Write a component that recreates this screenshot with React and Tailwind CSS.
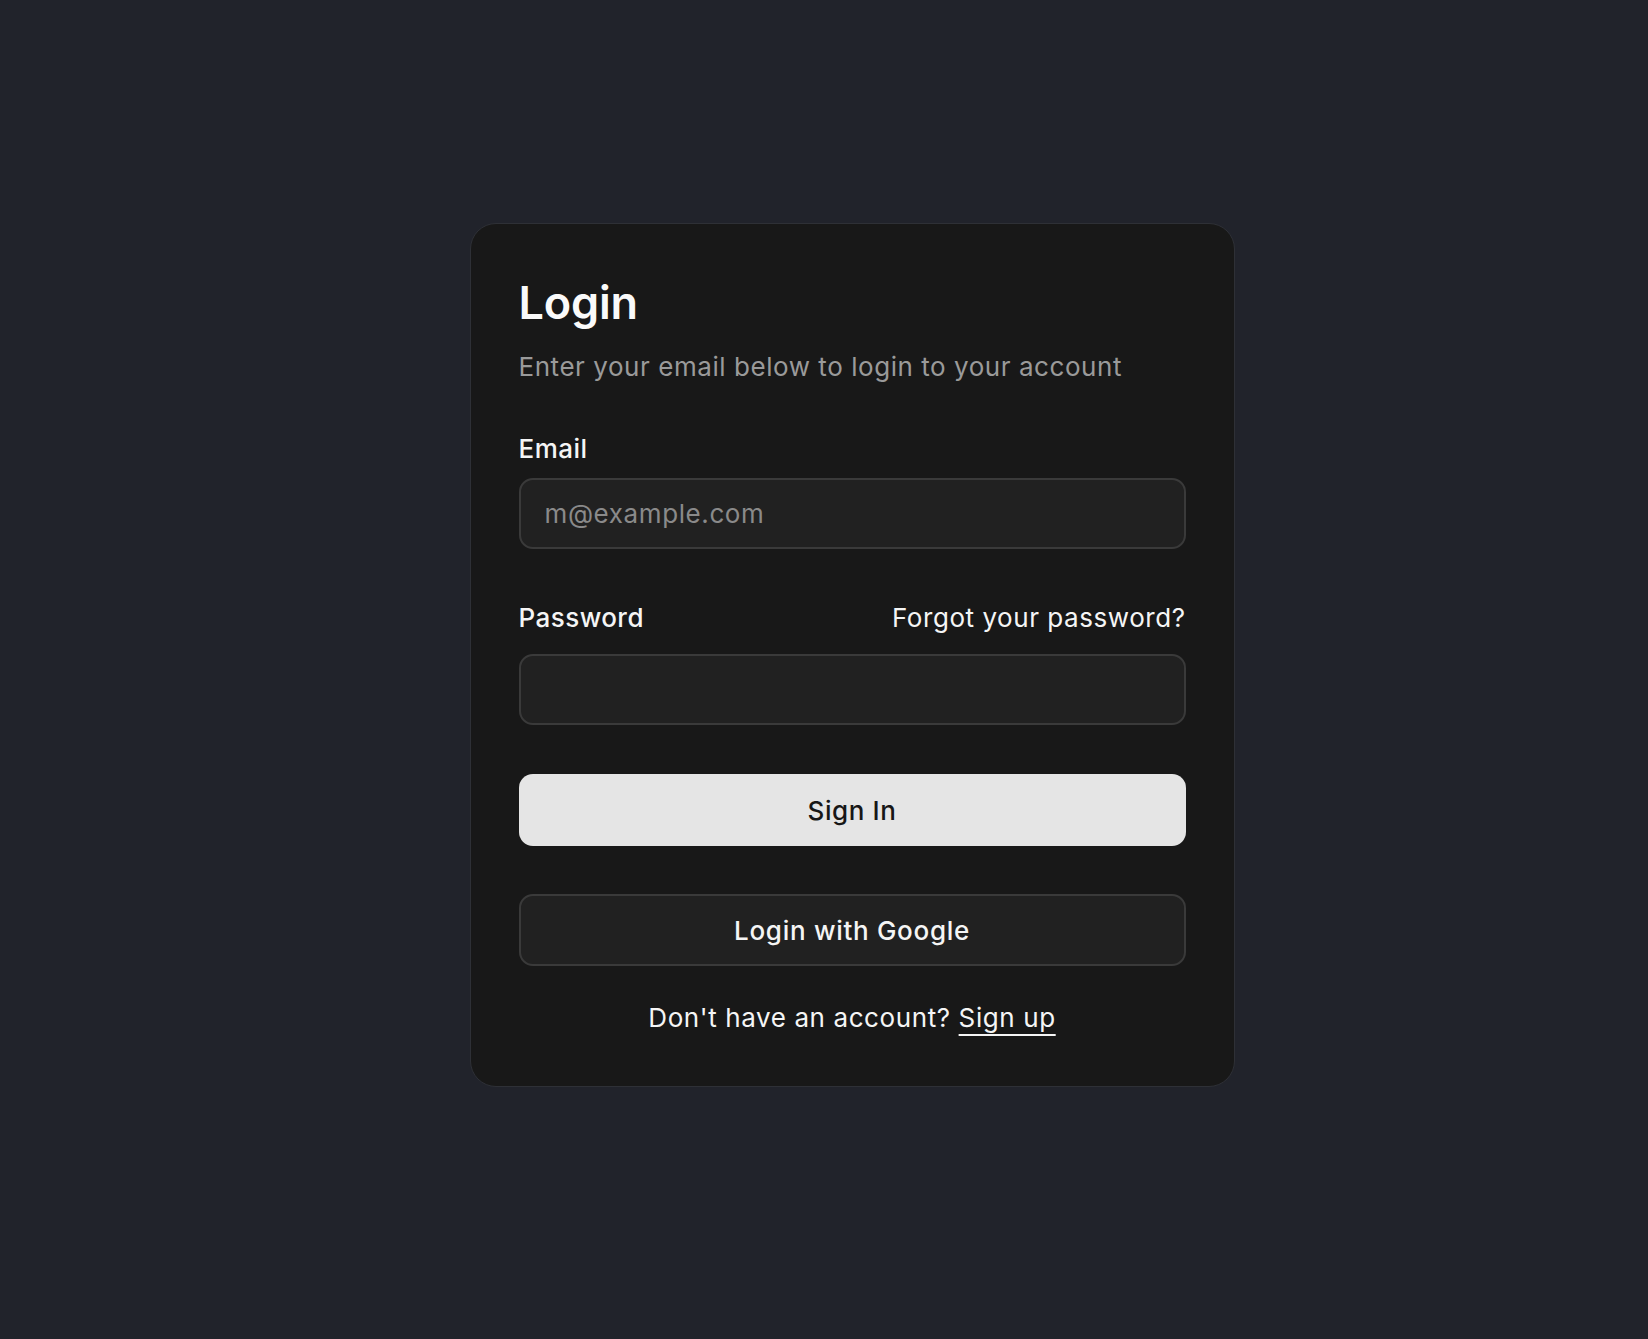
import { useState } from 'react';

export default function App() {
  const [email, setEmail] = useState('');
  const [password, setPassword] = useState('');

  return (
    <main className="min-h-screen bg-[#21232b] pt-[223px] pb-[252px] pl-[56px] flex justify-center font-['Inter',sans-serif]">
      <div className="w-[765px] h-fit bg-[#181818] border border-[#2e3036] rounded-[26px] px-[48px] pt-[56px] pb-[50px]">
        <h1 className="text-[45px] leading-none font-semibold text-[#fafafa] tracking-[-0.2px]">Login</h1>
        <p className="mt-[24px] text-[26px] leading-[36px] tracking-[0.55px] text-[#9a9a9a]">Enter your email below to login to your account</p>

        <form onSubmit={e => e.preventDefault()}>
          <label className="block mt-[46px] text-[26px] leading-[36px] tracking-[0.45px] font-medium text-[#f5f5f5]">Email</label>
          <input
            type="email"
            value={email}
            placeholder="m@example.com"
            onChange={e => setEmail(e.target.value)}
            className="mt-[11px] w-full h-[71px] bg-[#212121] border-2 border-[#3a3a3a] rounded-[14px] px-[24px] text-[26px] tracking-[0.6px] text-[#f5f5f5] placeholder:text-[#8a8a8a] outline-none"
          />

          <div className="mt-[51px] flex items-center justify-between">
            <label className="text-[26px] leading-[36px] tracking-[0.45px] font-medium text-[#f5f5f5]">Password</label>
            <a href="#" className="text-[26px] leading-[36px] tracking-[0.55px] text-[#f5f5f5]">Forgot your password?</a>
          </div>
          <input
            type="password"
            value={password}
            onChange={e => setPassword(e.target.value)}
            className="mt-[18px] w-full h-[71px] bg-[#212121] border-2 border-[#3a3a3a] rounded-[14px] px-[24px] text-[26px] text-[#f5f5f5] outline-none"
          />

          <button type="submit" className="mt-[49px] w-full h-[72px] bg-[#e5e5e5] rounded-[14px] text-[26px] tracking-[0.6px] font-medium text-[#171717]">Sign In</button>
          <button type="button" className="mt-[48px] w-full h-[72px] bg-[#212121] border-2 border-[#3a3a3a] rounded-[14px] text-[26px] tracking-[0.7px] font-medium text-[#f5f5f5]">Login with Google</button>
        </form>

        <p className="mt-[34px] text-center text-[26px] leading-[36px] tracking-[0.6px] text-[#f5f5f5]">
          Don't have an account? <a href="#" className="underline decoration-2 underline-offset-[7px]">Sign up</a>
        </p>
      </div>
    </main>
  );
}
